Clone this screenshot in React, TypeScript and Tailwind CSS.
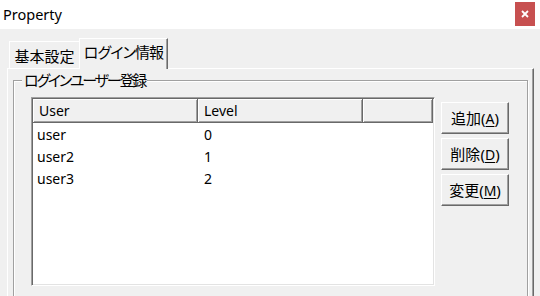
import React from "react";

const font = "font-['Noto_Sans','Noto_Sans_CJK_JP',sans-serif] [font-feature-settings:'palt']";

function Btn({ label, k }: { label: string; k: string }) {
  return (
    <div className="w-[68px] h-[32px] flex items-center justify-center bg-[#f0f0f0] border border-t-white border-l-white border-b-[#696969] border-r-[#696969] shadow-[inset_-1px_-1px_0_#a0a0a0] text-[15px] text-black">
      <span>
        {label}(<span className="underline underline-offset-2 text-[14px]">{k}</span>)
      </span>
    </div>
  );
}

export default function App() {
  const rows = [
    ["user", "0"],
    ["user2", "1"],
    ["user3", "2"],
  ];
  return (
    <div className={`w-[540px] h-[296px] bg-[#f0f0f0] flex flex-col overflow-hidden text-black ${font}`}>
      <div className="h-[29px] bg-white flex items-start justify-between shrink-0">
        <span className="pl-[3px] pt-[4px] text-[14.5px] leading-[20px]">Property</span>
        <div className="mt-[2px] mr-[5px] w-[20px] h-[24px] bg-[#c75050] flex items-center justify-center">
          <svg width="8" height="8" viewBox="0 0 8 8">
            <path d="M1 1L7 7M7 1L1 7" stroke="white" strokeWidth="1.8" />
          </svg>
        </div>
      </div>
      <div className="flex-1 flex flex-col pl-[7px] pr-[6px]">
        <div className="h-[39px] flex items-end pl-[2px] shrink-0">
          <div className="w-[70px] h-[27px] border-t border-l border-white flex items-center justify-center text-[15px] pt-[2px]">
            基本設定
          </div>
          <div className="relative z-10 -mb-[1px] w-[89px] h-[31px] bg-[#f0f0f0] border-t border-l border-white border-r border-r-[#696969] shadow-[inset_-1px_0_0_#a0a0a0] flex items-center justify-center text-[15px] tracking-[-0.9px] pb-[3px]">
            ログイン情報
          </div>
        </div>
        <div className="flex-1 border-t border-l border-white border-r border-r-[#696969] shadow-[inset_-1px_0_0_#a0a0a0] px-[5px]">
          <div className="relative mt-[11px] h-[240px] border border-[#a0a0a0] shadow-[inset_1px_1px_0_white,1px_1px_0_white] pl-[17px] pt-[16px] flex items-start">
            <span className="absolute left-[8px] -top-[11px] px-[2px] bg-[#f0f0f0] text-[15px] tracking-[-2.2px] leading-[20px]">
              ログインユーザー登録
            </span>
            <div className="w-[404px] h-[189px] bg-white border border-t-[#a0a0a0] border-l-[#a0a0a0] border-b-white border-r-white shadow-[inset_1px_1px_0_#696969,inset_-1px_-1px_0_#e3e3e3] p-[1px] flex flex-col">
              <div className="h-[24px] flex shrink-0 text-[14px]">
                <div className="w-[165px] bg-[#f0f0f0] border-b border-r border-[#696969] shadow-[inset_1px_1px_0_white,inset_-1px_-1px_0_#a0a0a0] pl-[6px] flex items-center">
                  User
                </div>
                <div className="w-[165px] bg-[#f0f0f0] border-b border-r border-[#696969] shadow-[inset_1px_1px_0_white,inset_-1px_-1px_0_#a0a0a0] pl-[6px] flex items-center">
                  Level
                </div>
                <div className="flex-1 bg-[#f0f0f0] border-b border-r border-[#696969] shadow-[inset_1px_1px_0_white,inset_-1px_-1px_0_#a0a0a0]" />
              </div>
              {rows.map(([u, l]) => (
                <div key={u} className="h-[22px] flex items-center text-[14px]">
                  <div className="w-[165px] pl-[4px]">{u}</div>
                  <div className="pl-[6px]">{l}</div>
                </div>
              ))}
            </div>
            <div className="ml-[6px] mt-[5px] flex flex-col gap-[4px]">
              <Btn label="追加" k="A" />
              <Btn label="削除" k="D" />
              <Btn label="変更" k="M" />
            </div>
          </div>
        </div>
      </div>
    </div>
  );
}
